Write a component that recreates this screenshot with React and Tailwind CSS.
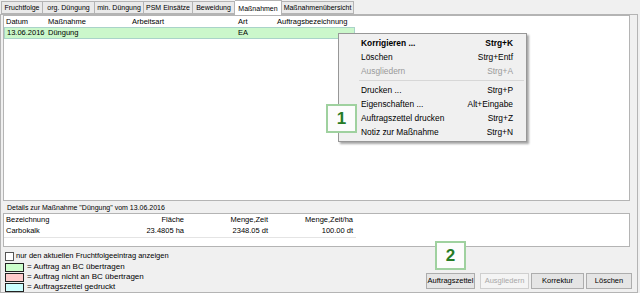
import React from "react";

const tabs = [
  ["Fruchtfolge", 42],
  ["org. Düngung", 52],
  ["min. Düngung", 49],
  ["PSM Einsätze", 49],
  ["Beweidung", 42],
  ["Maßnahmen", 47],
  ["Maßnahmenübersicht", 72],
];

function MenuItem({ label, shortcut, bold, disabled }) {
  return (
    <div
      className={
        "flex h-[14px] items-center justify-between whitespace-nowrap pl-[22px] pr-[13px] " +
        (disabled ? "text-[#9a9a9a] " : "text-black ") +
        (bold ? "font-bold" : "")
      }
    >
      <span>{label}</span>
      <span>{shortcut}</span>
    </div>
  );
}

function Badge({ n }) {
  return (
    <div className="flex h-[29px] w-[31px] items-center justify-center border-2 border-[#9fd19f] bg-[#fcfcfc] text-[17px] font-bold text-[#257a25]">
      {n}
    </div>
  );
}

function Btn({ children, w, disabled }) {
  return (
    <div
      className={
        "flex h-[16px] items-center justify-center whitespace-nowrap border " +
        w +
        (disabled
          ? " border-[#cfcfcf] bg-[#f4f4f4] text-[#a8a8a8]"
          : " border-[#adadad] bg-[#e5e5e5] text-black")
      }
    >
      {children}
    </div>
  );
}

export default function App() {
  return (
    <div
      className="relative h-[293px] w-[640px] overflow-hidden whitespace-nowrap bg-[#f0f0f0] text-[7.5px] leading-none text-black"
      style={{ fontFamily: '"Liberation Sans", Arial, sans-serif' }}
    >
      {/* Tabs */}
      <div className="relative z-10 flex h-[14px] items-start pl-[1px] pt-[1px] text-[7px]">
        {tabs.map(([t, w], i) => {
          const active = t === "Maßnahmen";
          return (
            <div
              key={t}
              style={{ width: w }}
              className={
                "flex items-center justify-center border-r border-t border-[#b4b4b4] " +
                (i === 0 ? "border-l " : "") +
                (active
                  ? "-mt-[1px] h-[15px] bg-white"
                  : "h-[13px] border-b bg-[#eaeaea]")
              }
            >
              {t}
            </div>
          );
        })}
      </div>

      {/* Panel */}
      <div className="flex h-[279px] w-[638px] flex-col border border-[#b4b4b4] pl-[2px] pr-[7px]">
        {/* List */}
        <div className="h-[186px] border border-[#b4b4b4] bg-white">
          <div className="flex h-[11px] items-center">
            <div className="w-[44px] pl-[2px]">Datum</div>
            <div className="w-[84px]">Maßnahme</div>
            <div className="w-[106px]">Arbeitsart</div>
            <div className="w-[39px]">Art</div>
            <div>Auftragsbezeichnung</div>
          </div>
          <div className="flex h-[12px] w-[351px] items-center border border-[#a9d3c9] bg-[#cbf7cb]">
            <div className="w-[43px] pl-[2px]">13.06.2016</div>
            <div className="w-[190px]">Düngung</div>
            <div>EA</div>
          </div>
        </div>

        {/* Details label */}
        <div className="flex h-[12px] items-center pl-[4px] text-[7px]">
          Details zur Maßnahme "Düngung" vom 13.06.2016
        </div>

        {/* Details table */}
        <div className="h-[34px] border border-[#b4b4b4] bg-white">
          <div className="flex h-[11px] items-center">
            <div className="w-[110px] pl-[2px]">Bezeichnung</div>
            <div className="w-[70px] text-right">Fläche</div>
            <div className="w-[84px] text-right">Menge,Zeit</div>
            <div className="w-[85px] text-right">Menge,Zeit/ha</div>
          </div>
          <div className="flex h-[13px] w-[352px] items-center border-b border-[#e4e4e4]">
            <div className="w-[110px] pl-[2px]">Carbokalk</div>
            <div className="w-[70px] text-right">23.4805 ha</div>
            <div className="w-[84px] text-right">2348.05 dt</div>
            <div className="w-[85px] text-right">100.00 dt</div>
          </div>
        </div>

        {/* Bottom */}
        <div className="flex flex-1 items-end justify-between text-[8px]">
          <div className="flex flex-col pl-[2px]">
            <div className="mb-[1px] flex h-[10px] items-center">
              <div className="mr-[2px] h-[9px] w-[9px] border border-[#555] bg-white" />
              <span className="text-[7.5px]">nur den aktuellen Fruchtfolgeeintrag anzeigen</span>
            </div>
            <div className="flex h-[10px] items-center">
              <div className="mr-[3px] h-[9px] w-[19px] border border-[#222] bg-[#ccffcc]" />
              <span>= Auftrag an BC übertragen</span>
            </div>
            <div className="flex h-[10px] items-center">
              <div className="mr-[3px] h-[9px] w-[19px] border border-[#222] bg-[#ffcccc]" />
              <span>= Auftrag nicht an BC übertragen</span>
            </div>
            <div className="flex h-[10px] items-center">
              <div className="mr-[3px] h-[9px] w-[19px] border border-[#222] bg-[#ccffff]" />
              <span>= Auftragszettel gedruckt</span>
            </div>
          </div>
          <div className="mb-[3px] mr-[-2px] flex items-center text-[7.5px]">
            <Btn w="w-[49px]">Auftragszettel</Btn>
            <div className="w-[5px]" />
            <Btn w="w-[49px]" disabled>
              Ausgliedern
            </Btn>
            <div className="w-[2px]" />
            <Btn w="w-[53px]">Korrektur</Btn>
            <div className="w-[2px]" />
            <Btn w="w-[46px]">Löschen</Btn>
          </div>
        </div>
      </div>

      {/* Context menu */}
      <div className="absolute left-[338px] top-[33px] z-20 w-[189px] border border-[#979797] bg-[#f0f0f0] py-[2px] text-[8.4px] shadow-[2px_2px_2px_rgba(0,0,0,0.35)]">
        <MenuItem label="Korrigieren ..." shortcut="Strg+K" bold />
        <MenuItem label="Löschen" shortcut="Strg+Entf" />
        <MenuItem label="Ausgliedern" shortcut="Strg+A" disabled />
        <div className="my-[2px] ml-[20px] mr-[2px] h-[1px] bg-[#d7d7d7]" />
        <MenuItem label="Drucken ..." shortcut="Strg+P" />
        <MenuItem label="Eigenschaften ..." shortcut="Alt+Eingabe" />
        <MenuItem label="Auftragszettel drucken" shortcut="Strg+Z" />
        <MenuItem label="Notiz zur Maßnahme" shortcut="Strg+N" />
      </div>

      {/* Badges */}
      <div className="absolute left-[326px] top-[104px] z-30">
        <Badge n="1" />
      </div>
      <div className="absolute left-[435px] top-[241px] z-30">
        <Badge n="2" />
      </div>
    </div>
  );
}
